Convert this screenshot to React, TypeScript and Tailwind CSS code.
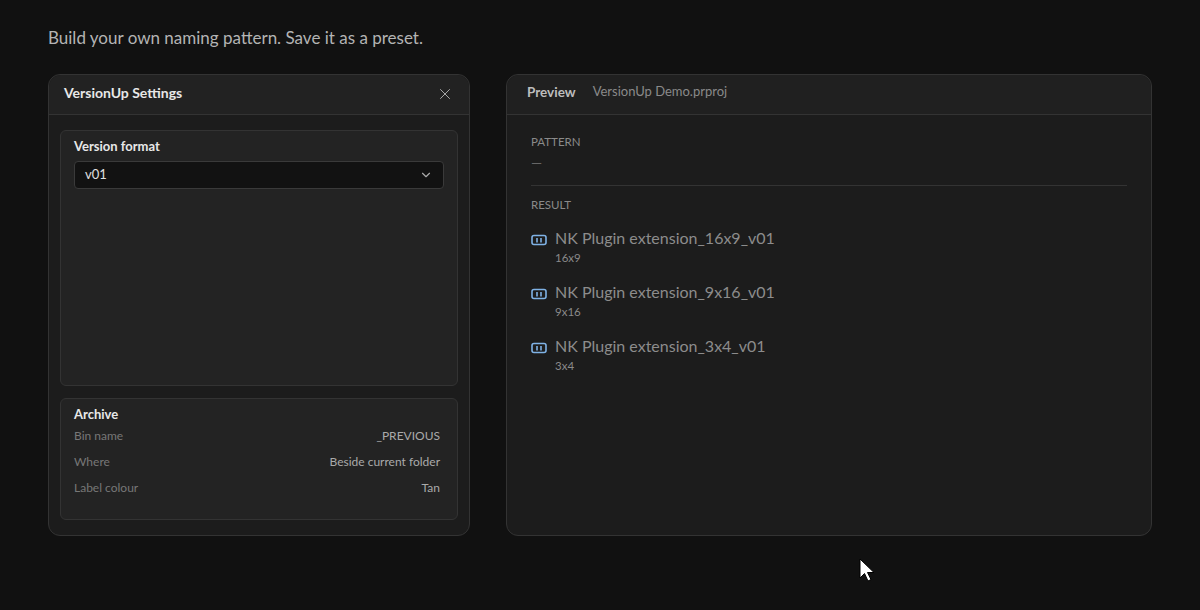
import { X, ChevronDown } from "lucide-react";

const results = [
  { name: "NK Plugin extension_16x9_v01", sub: "16x9" },
  { name: "NK Plugin extension_9x16_v01", sub: "9x16" },
  { name: "NK Plugin extension_3x4_v01", sub: "3x4" },
];

const archive = [
  ["Bin name", "_PREVIOUS"],
  ["Where", "Beside current folder"],
  ["Label colour", "Tan"],
];

function SequenceIcon() {
  return (
    <svg width="16" height="12" viewBox="0 0 16 12" fill="none" stroke="#7fb2e5" strokeWidth="1.6">
      <rect x="1" y="1.5" width="14" height="9" rx="2" />
      <line x1="6" y1="4" x2="6" y2="8.5" />
      <line x1="10" y1="4" x2="10" y2="8.5" />
    </svg>
  );
}

export default function App() {
  return (
    <div
      className="relative h-[610px] w-[1200px] overflow-hidden bg-[#111111] px-12 pt-[25px]"
      style={{ fontFamily: "Lato, 'Noto Sans', sans-serif" }}
    >
      <p className="text-[17px] text-[#b4b4b4]">Build your own naming pattern. Save it as a preset.</p>

      <div className="mt-[23px] flex gap-9">
        {/* settings panel */}
        <div className="flex h-[462px] w-[422px] flex-col rounded-xl border border-[#333] bg-[#1c1c1c]">
          <div className="flex h-[40px] items-center justify-between border-b border-[#333] bg-[#222] rounded-t-xl px-[15px] pb-[4px]">
            <span className="text-[14px] font-bold text-[#e8e8e8]">VersionUp Settings</span>
            <X size={18} strokeWidth={1.3} className="mt-[3px] text-[#aaa]" />
          </div>
          <div className="flex flex-1 flex-col gap-3 px-[11px] pb-3 pt-[15px]">
            <div className="h-[256px] rounded-md border border-[#333] bg-[#232323] px-[13px] pt-[6px]">
              <p className="text-[13px] font-bold text-[#e8e8e8]">Version format</p>
              <div className="mt-[5px] flex h-[28px] items-center justify-between rounded border border-[#3a3a3a] bg-[#121212] px-[10px]">
                <span className="text-[13px] text-[#e0e0e0]">v01</span>
                <ChevronDown size={14} className="text-[#aaa]" />
              </div>
            </div>
            <div className="h-[122px] rounded-md border border-[#333] bg-[#232323] px-[13px] pt-[6px]">
              <p className="text-[13px] font-bold text-[#e8e8e8]">Archive</p>
              <div className="mt-[3px] flex flex-col gap-[8px]">
                {archive.map(([k, v]) => (
                  <div key={k} className="flex justify-between pr-[4px] text-[12px] leading-[18px]">
                    <span className="text-[#777]">{k}</span>
                    <span className="text-[#aaa]">{v}</span>
                  </div>
                ))}
              </div>
            </div>
          </div>
        </div>

        {/* preview panel */}
        <div className="h-[462px] w-[646px] rounded-xl border border-[#333] bg-[#1c1c1c]">
          <div className="flex h-[40px] items-center gap-[17px] border-b border-[#333] bg-[#202020] rounded-t-xl px-5 pb-[4px]">
            <span className="text-[13.5px] font-bold text-[#bdbdbd]">Preview</span>
            <span className="text-[13px] text-[#8a8a8a]">VersionUp Demo.prproj</span>
          </div>
          <div className="px-6 pt-[18px]">
            <p className="text-[11.5px] text-[#8a8a8a]">PATTERN</p>
            <p className="mt-[2px] text-[14px] text-[#666]">—</p>
            <div className="mt-[12px] h-px bg-[#333]" />
            <p className="mt-[10px] text-[11.5px] text-[#8a8a8a]">RESULT</p>
            <div className="mt-[14px] flex flex-col gap-[14px]">
              {results.map((r) => (
                <div key={r.name} className="flex gap-[8px]">
                  <div className="pt-[7px]"><SequenceIcon /></div>
                  <div>
                    <p className="text-[16px] leading-[22px] text-[#8c8c8c]">{r.name}</p>
                    <p className="text-[11.5px] leading-[18px] text-[#8a8a8a]">{r.sub}</p>
                  </div>
                </div>
              ))}
            </div>
          </div>
        </div>
      </div>

      <svg className="absolute left-[859px] top-[558px]" width="18" height="25" viewBox="0 0 18 25">
        <path d="M1 1 L1 20 L5.5 15.5 L9 23 L12 21.5 L8.5 14.5 L15 14.5 Z" fill="#fff" stroke="#000" strokeWidth="1" />
      </svg>
    </div>
  );
}
